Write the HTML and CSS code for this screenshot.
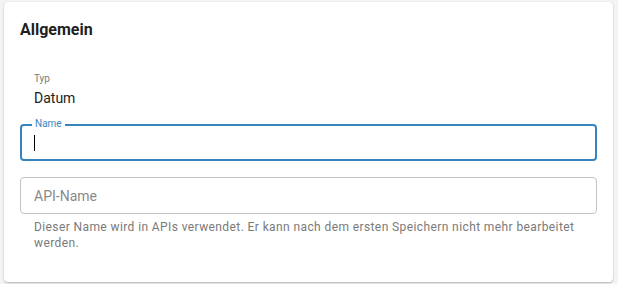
FILE: index.html
```html
<!DOCTYPE html>
<html lang="de">
<head>
<meta charset="utf-8">
<link rel="stylesheet" href="styles.css">
</head>
<body>
<div class="card">
  <h2 class="title">Allgemein</h2>
  <div class="readonly">
    <div class="ro-label">Typ</div>
    <div class="ro-value">Datum</div>
  </div>
  <div class="field focused">
    <span class="float-label">Name</span>
    <div class="input"><span class="caret"></span></div>
  </div>
  <div class="field plain">
    <div class="input placeholder">API-Name</div>
  </div>
  <p class="helper">Dieser Name wird in APIs verwendet. Er kann nach dem ersten Speichern nicht mehr bearbeitet werden.</p>
</div>
</body>
</html>
```
FILE: styles.css
```css
html, body {
  margin: 0;
  padding: 0;
  background: #f4f4f4;
  font-family: Roboto, "Liberation Sans", sans-serif;
}
body {
  padding: 2px 5px 2px 4px;
}
.card {
  background: #fff;
  border-radius: 4px;
  box-shadow: 0 1px 2px rgba(0,0,0,0.25), 0 0 1px rgba(0,0,0,0.12);
  height: 280px;
  box-sizing: border-box;
  padding: 17px 16px 0 16px;
}
.title {
  margin: 0;
  font-size: 16px;
  font-weight: 700;
  line-height: 22px;
  color: #1f1f1f;
}
.readonly {
  padding: 32px 0 0 14px;
}
.ro-label {
  font-size: 10px;
  line-height: 12px;
  color: #7a7a7a;
}
.ro-value {
  font-size: 14px;
  line-height: 20px;
  color: #222;
  margin-top: 3px;
}
.field {
  position: relative;
  border-radius: 4px;
  box-sizing: border-box;
  height: 37px;
  width: 577px;
}
.focused {
  margin-top: 16px;
  border: 2px solid #3784bf;
}
.plain {
  margin-top: 16px;
  border: 1px solid #c4c4c4;
}
.float-label {
  position: absolute;
  left: 10px;
  top: -8px;
  padding: 0 3px;
  background: #fff;
  font-size: 10px;
  line-height: 12px;
  color: #3a87c2;
}
.input {
  display: flex;
  align-items: center;
  height: 100%;
  padding-left: 12px;
  font-size: 14px;
  color: #222;
}
.plain .input {
  padding-left: 13px;
}
.placeholder {
  color: #8a8a8a;
}
.caret {
  display: block;
  width: 0;
  height: 16px;
  border-left: 1px solid #000;
  margin-top: 1px;
}
.helper {
  margin: 5px 14px 0 14px;
  font-size: 12px;
  line-height: 16px;
  letter-spacing: 0.4px;
  color: #7a7a7a;
}
```
